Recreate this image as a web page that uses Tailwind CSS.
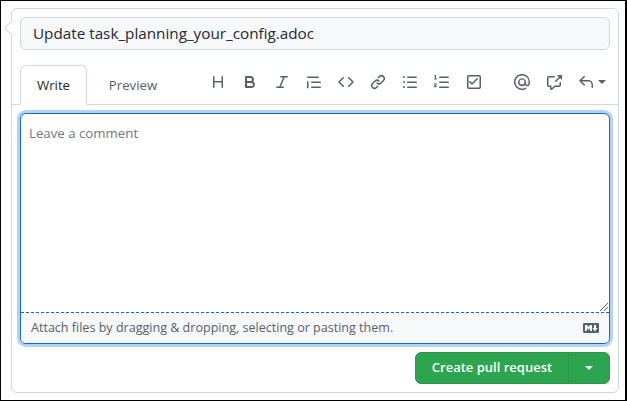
<!DOCTYPE html>
<html lang="en">
<head>
  <meta charset="UTF-8" />
  <title>Create pull request</title>
  <script src="https://cdn.jsdelivr.net/npm/@tailwindcss/browser@4"></script>
</head>
<body class="bg-white font-['Open_Sans',sans-serif] text-[#24292f]">
  <div class="w-[627px] h-[401px] border-black border-t-[1px] border-l-[1px] border-r-[2px] border-b-[1px] pt-[7px] pl-[10px] overflow-hidden">

    <!-- card -->
    <div class="relative w-[608px] h-[385px] border border-[#d0d7de] rounded-md bg-white">
      <div class="absolute -left-[6px] top-[14px] w-[10px] h-[10px] rotate-45 bg-white border-l border-b border-[#d0d7de]"></div>

      <div class="relative px-2 pt-2">
        <div class="h-[33px] rounded-md border border-[#d0d7de] bg-[#f6f8fa] pl-3 flex items-center text-[15.25px]">Update task_planning_your_config.adoc</div>
      </div>

      <!-- tabs + toolbar -->
      <div class="mt-[15px] h-[40px] border-b border-[#d0d7de] flex items-end pl-2 pr-[8px]">
        <div class="w-[67px] h-[40px] pt-[2px] -mb-px border border-[#d0d7de] border-b-white rounded-t-md bg-white flex items-center justify-center text-[13.25px]">Write</div>
        <div class="ml-[11px] w-[70px] h-[40px] pt-[2px] -mb-px flex items-center justify-center text-[13.25px] text-[#57606a]">Preview</div>

        <div class="flex-1 h-[36px] mb-[4px] flex items-center text-[#57606a]">
          <div class="ml-[42px] flex items-center gap-[16px]">
            <svg class="w-4 h-4 fill-current" viewBox="0 0 16 16"><path d="M3.75 2a.75.75 0 0 1 .75.75V7h7V2.75a.75.75 0 0 1 1.5 0v10.5a.75.75 0 0 1-1.5 0V8.5h-7v4.75a.75.75 0 0 1-1.5 0V2.75A.75.75 0 0 1 3.75 2Z"/></svg>
            <svg class="w-4 h-4 fill-current" viewBox="0 0 16 16"><path d="M4 2h4.5a3.501 3.501 0 0 1 2.852 5.53A3.499 3.499 0 0 1 9.5 14H4a1 1 0 0 1-1-1V3a1 1 0 0 1 1-1Zm1 7v3h4.5a1.5 1.5 0 0 0 0-3Zm3.5-2a1.5 1.5 0 0 0 0-3H5v3Z"/></svg>
            <svg class="w-4 h-4 fill-current" viewBox="0 0 16 16"><path d="M6 2.75A.75.75 0 0 1 6.75 2h6.5a.75.75 0 0 1 0 1.5h-2.505l-3.858 9H9.25a.75.75 0 0 1 0 1.5h-6.5a.75.75 0 0 1 0-1.5h2.505l3.858-9H6.75A.75.75 0 0 1 6 2.75Z"/></svg>
            <svg class="w-4 h-4 fill-current" viewBox="0 0 16 16"><path d="M1.75 2.5h10.5a.75.75 0 0 1 0 1.5H1.75a.75.75 0 0 1 0-1.5Zm4 5h8.5a.75.75 0 0 1 0 1.5h-8.5a.75.75 0 0 1 0-1.5Zm0 5h8.5a.75.75 0 0 1 0 1.5h-8.5a.75.75 0 0 1 0-1.5ZM2.5 7.75v6a.75.75 0 0 1-1.5 0v-6a.75.75 0 0 1 1.5 0Z"/></svg>
            <svg class="w-4 h-4 fill-current" viewBox="0 0 16 16"><path d="m11.28 3.22 4.25 4.25a.75.75 0 0 1 0 1.06l-4.25 4.25a.749.749 0 0 1-1.275-.326.749.749 0 0 1 .215-.734L13.94 8l-3.72-3.72a.749.749 0 0 1 .326-1.275.749.749 0 0 1 .734.215Zm-6.56 0a.751.751 0 0 1 1.042.018.751.751 0 0 1 .018 1.042L2.06 8l3.72 3.72a.749.749 0 0 1-.326 1.275.749.749 0 0 1-.734-.215L.47 8.53a.75.75 0 0 1 0-1.06Z"/></svg>
            <svg class="w-4 h-4 fill-current" viewBox="0 0 16 16"><path d="m7.775 3.275 1.25-1.25a3.5 3.5 0 1 1 4.95 4.95l-2.5 2.5a3.5 3.5 0 0 1-4.95 0 .751.751 0 0 1 .018-1.042.751.751 0 0 1 1.042-.018 1.998 1.998 0 0 0 2.83 0l2.5-2.5a2.002 2.002 0 0 0-2.83-2.83l-1.25 1.25a.751.751 0 0 1-1.042-.018.751.751 0 0 1-.018-1.042Zm-4.69 9.64a1.998 1.998 0 0 0 2.83 0l1.25-1.25a.751.751 0 0 1 1.042.018.751.751 0 0 1 .018 1.042l-1.25 1.25a3.5 3.5 0 1 1-4.95-4.95l2.5-2.5a3.5 3.5 0 0 1 4.95 0 .751.751 0 0 1-.018 1.042.751.751 0 0 1-1.042.018 1.998 1.998 0 0 0-2.83 0l-2.5 2.5a1.998 1.998 0 0 0 0 2.83Z"/></svg>
            <svg class="w-4 h-4 fill-current" viewBox="0 0 16 16"><path d="M5.75 2.5h8.5a.75.75 0 0 1 0 1.5h-8.5a.75.75 0 0 1 0-1.5Zm0 5h8.5a.75.75 0 0 1 0 1.5h-8.5a.75.75 0 0 1 0-1.5Zm0 5h8.5a.75.75 0 0 1 0 1.5h-8.5a.75.75 0 0 1 0-1.5ZM2 14a1 1 0 1 1 0-2 1 1 0 0 1 0 2Zm1-6a1 1 0 1 1-2 0 1 1 0 0 1 2 0ZM2 4a1 1 0 1 1 0-2 1 1 0 0 1 0 2Z"/></svg>
            <svg class="w-4 h-4 fill-current" viewBox="0 0 16 16"><path d="M5 3.25a.75.75 0 0 1 .75-.75h8.5a.75.75 0 0 1 0 1.5h-8.5A.75.75 0 0 1 5 3.25Zm0 5a.75.75 0 0 1 .75-.75h8.5a.75.75 0 0 1 0 1.5h-8.5A.75.75 0 0 1 5 8.25Zm0 5a.75.75 0 0 1 .75-.75h8.5a.75.75 0 0 1 0 1.5h-8.5a.75.75 0 0 1-.75-.75ZM.924 10.32a.5.5 0 0 1-.851-.525c.34-.551.989-.645 1.46-.645.286 0 .604.06.874.236.29.19.493.508.493.93 0 .393-.16.67-.383.87-.178.16-.402.28-.59.38l-.12.064c-.239.134-.47.28-.611.499h1.2a.5.5 0 0 1 0 1H.5a.5.5 0 0 1-.5-.5c0-1.03.56-1.558 1.1-1.86.1-.056.2-.107.285-.153.172-.09.298-.158.38-.233.065-.058.09-.1.09-.188 0-.065-.02-.1-.07-.133a.6.6 0 0 0-.33-.083c-.42 0-.62.095-.681.193ZM1.5 1a.5.5 0 0 1 .5.5v3h.5a.5.5 0 0 1 0 1h-2a.5.5 0 0 1 0-1H1V2.28l-.2.1a.5.5 0 1 1-.45-.894l1-.5A.5.5 0 0 1 1.5 1Z"/></svg>
            <svg class="w-4 h-4 fill-current" viewBox="0 0 16 16"><path fill-rule="evenodd" d="M2.5 2.75a.25.25 0 0 1 .25-.25h10.5a.25.25 0 0 1 .25.25v10.5a.25.25 0 0 1-.25.25H2.75a.25.25 0 0 1-.25-.25ZM2.75 1h10.5c.966 0 1.75.784 1.75 1.75v10.5A1.75 1.75 0 0 1 13.25 15H2.75A1.75 1.75 0 0 1 1 13.25V2.75C1 1.784 1.784 1 2.75 1Z"/><path d="M11.78 5.28l-5.25 5.25a.75.75 0 0 1-1.06 0L3.22 8.28a.75.75 0 1 1 1.06-1.06L6 8.94l4.72-4.72a.75.75 0 1 1 1.06 1.06Z"/></svg>
          </div>
          <div class="ml-[32px] flex items-center gap-[16px]">
            <svg class="w-4 h-4 fill-current" viewBox="0 0 16 16"><path d="M4.75 2.37a6.5 6.5 0 0 0 6.5 11.26.75.75 0 0 1 .75 1.298A8 8 0 1 1 16 8v1.5a2.75 2.75 0 0 1-5.03 1.54A4 4 0 1 1 12 8v1.5a1.25 1.25 0 0 0 2.5 0V8a6.5 6.5 0 0 0-9.75-5.63ZM10.5 8a2.5 2.5 0 1 0-5 0 2.5 2.5 0 0 0 5 0Z"/></svg>
            <svg class="w-4 h-4 fill-current" viewBox="0 0 16 16"><path d="M2.75 3.5a.25.25 0 0 0-.25.25v7.5c0 .138.112.25.25.25h2a.75.75 0 0 1 .75.75v2.19l2.72-2.72a.749.749 0 0 1 .53-.22h4.5a.25.25 0 0 0 .25-.25v-2.5a.75.75 0 0 1 1.5 0v2.5A1.75 1.75 0 0 1 13.25 13H9.06l-2.573 2.573A1.458 1.458 0 0 1 4 14.543V13H2.75A1.75 1.75 0 0 1 1 11.25v-7.5C1 2.784 1.784 2 2.75 2h5.5a.75.75 0 0 1 0 1.5ZM16 1.25v4.146a.25.25 0 0 1-.427.177L14.03 4.03l-3.75 3.75a.749.749 0 0 1-1.275-.326.749.749 0 0 1 .215-.734l3.75-3.75-1.543-1.543A.25.25 0 0 1 11.604 1h4.146a.25.25 0 0 1 .25.25Z"/></svg>
            <div class="flex items-center gap-[4px]">
              <svg class="w-4 h-4 fill-current" viewBox="0 0 16 16"><path d="M6.78 1.97a.75.75 0 0 1 0 1.06L3.81 6h6.44A4.75 4.75 0 0 1 15 10.75v2.5a.75.75 0 0 1-1.5 0v-2.5a3.25 3.25 0 0 0-3.25-3.25H3.81l2.97 2.97a.749.749 0 0 1-.326 1.275.749.749 0 0 1-.734-.215L1.47 7.28a.75.75 0 0 1 0-1.06l4.25-4.25a.75.75 0 0 1 1.06 0Z"/></svg>
              <span class="w-0 h-0 border-x-[4px] border-x-transparent border-t-[4px] border-t-[#57606a]"></span>
            </div>
          </div>
        </div>
      </div>

      <!-- comment box -->
      <div class="relative mx-2 mt-2 h-[231px] rounded-md border border-[#0969da] shadow-[0_0_0_3px_rgba(9,105,218,0.3)] bg-white flex flex-col overflow-hidden">
        <div class="relative flex-1 px-2 pt-[9px] text-[13.25px] leading-[20px] text-[#6e7781]">
          Leave a comment
          <svg class="absolute right-0 bottom-0 w-[10px] h-[10px] stroke-[#57606a]" viewBox="0 0 10 10"><path d="M1 9 9 1M5 9 9 5" fill="none"/></svg>
        </div>
        <div class="h-[31px] border-t border-dashed border-[#0969da] bg-[#f6f8fa] pl-[10px] pr-[10px] flex items-center justify-between text-[12.55px] text-[#57606a]">
          <span>Attach files by dragging &amp; dropping, selecting or pasting them.</span>
          <svg class="w-4 h-4 fill-current" viewBox="0 0 16 16"><path d="M14.85 3c.63 0 1.15.52 1.14 1.15v7.7c0 .63-.51 1.15-1.15 1.15H1.15C.52 13 0 12.48 0 11.84V4.15C0 3.52.52 3 1.15 3ZM9 11V5H7L5.5 7 4 5H2v6h2V8l1.5 1.92L7 8v3Zm2.99.5L14.5 8H13V5h-2v3H9.5Z"/></svg>
        </div>
      </div>

      <!-- actions -->
      <div class="mt-[8px] pr-2 flex justify-end">
        <div class="h-[32px] flex rounded-md bg-[#2da44e] text-white border border-[#2c974b]">
          <div class="w-[152px] flex items-center justify-center text-[13px] font-semibold">Create pull request</div>
          <div class="w-[41px] border-l border-[#2c974b] flex items-center justify-center">
            <span class="w-0 h-0 border-x-[4px] border-x-transparent border-t-[4px] border-t-white"></span>
          </div>
        </div>
      </div>
    </div>
  </div>
</body>
</html>
